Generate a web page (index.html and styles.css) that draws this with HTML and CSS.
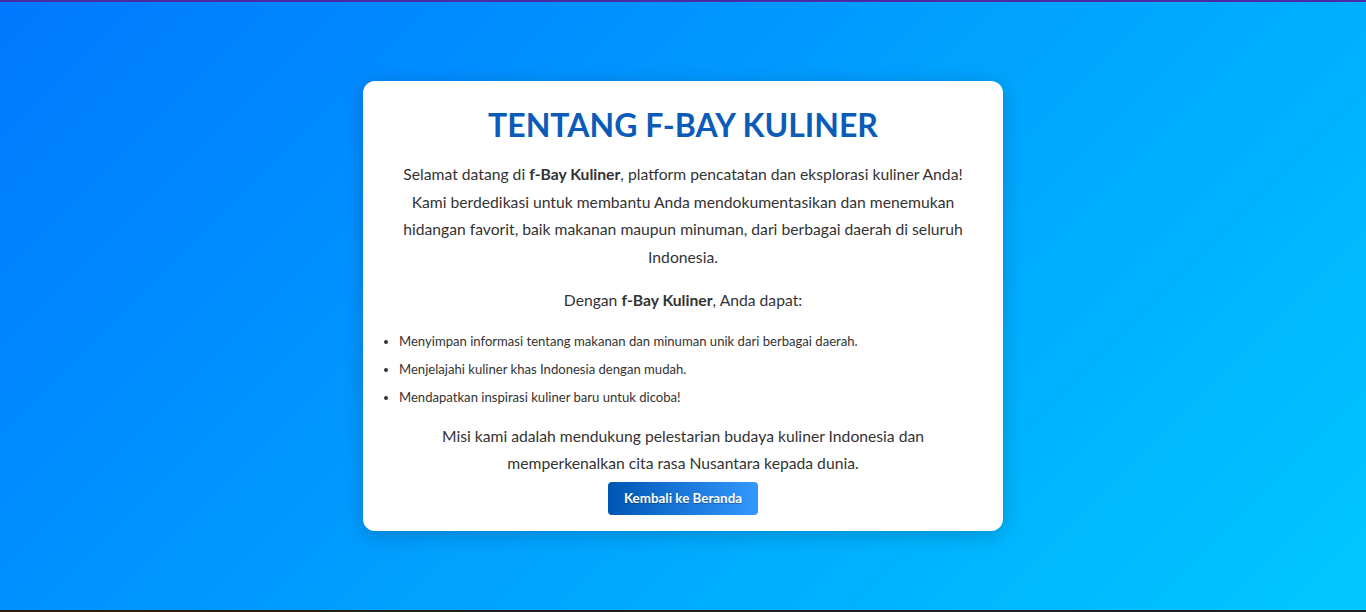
FILE: index.html
```html
<!DOCTYPE html>
<html lang="id">
<head>
<meta charset="utf-8">
<title>Tentang f-Bay Kuliner</title>
<link rel="stylesheet" href="styles.css">
</head>
<body>
<div class="topbar"></div>
<main class="page">
  <section class="card">
    <h1 class="title">TENTANG F-BAY KULINER</h1>
    <p class="text">Selamat datang di <strong>f-Bay Kuliner</strong>, platform pencatatan dan eksplorasi kuliner Anda! Kami berdedikasi untuk membantu Anda mendokumentasikan dan menemukan hidangan favorit, baik makanan maupun minuman, dari berbagai daerah di seluruh Indonesia.</p>
    <p class="text">Dengan <strong>f-Bay Kuliner</strong>, Anda dapat:</p>
    <ul class="features">
      <li>Menyimpan informasi tentang makanan dan minuman unik dari berbagai daerah.</li>
      <li>Menjelajahi kuliner khas Indonesia dengan mudah.</li>
      <li>Mendapatkan inspirasi kuliner baru untuk dicoba!</li>
    </ul>
    <p class="text mission">Misi kami adalah mendukung pelestarian budaya kuliner Indonesia dan memperkenalkan cita rasa Nusantara kepada dunia.</p>
    <a class="btn" href="#">Kembali ke Beranda</a>
  </section>
</main>
<div class="bottombar"></div>
</body>
</html>
```
FILE: styles.css
```css
* { box-sizing: border-box; }
html, body { height: 100%; }
body {
  margin: 0;
  display: flex;
  flex-direction: column;
  font-family: "Lato", "Open Sans", sans-serif;
  color: #333;
}
.topbar { height: 2px; background: #4a2ba6; flex: none; }
.bottombar { height: 2px; background: #1f1f1f; flex: none; }
.page {
  flex: 1;
  display: flex;
  align-items: center;
  justify-content: center;
  background: linear-gradient(135deg, #0078ff 0%, #00c8ff 100%);
}
.card {
  width: 640px;
  background: #fff;
  border-radius: 12px;
  padding: 24px 30px 16px;
  box-shadow: 0 4px 20px rgba(0, 0, 0, 0.2);
  text-align: center;
}
.title {
  margin: 0;
  font-size: 32px;
  line-height: 40px;
  font-weight: 700;
  color: #0a5cb8;
}
.text {
  margin: 16px 0;
  font-size: 15.7px;
  line-height: 27.6px;
}
.text strong { font-weight: 700; }
.features {
  margin: 16px 0;
  padding-left: 6px;
  text-align: left;
  font-size: 13.1px;
  line-height: 20px;
}
.features li { margin-bottom: 8px; }
.mission { margin-bottom: 4px; }
.btn {
  display: inline-block;
  padding: 8px 16px;
  font-size: 13.4px;
  line-height: 17px;
  font-weight: 700;
  color: #fff;
  text-decoration: none;
  border-radius: 4px;
  background: linear-gradient(90deg, #0056b3, #3399ff);
  text-shadow: 0 1px 1px rgba(0, 0, 0, 0.35);
}
```
